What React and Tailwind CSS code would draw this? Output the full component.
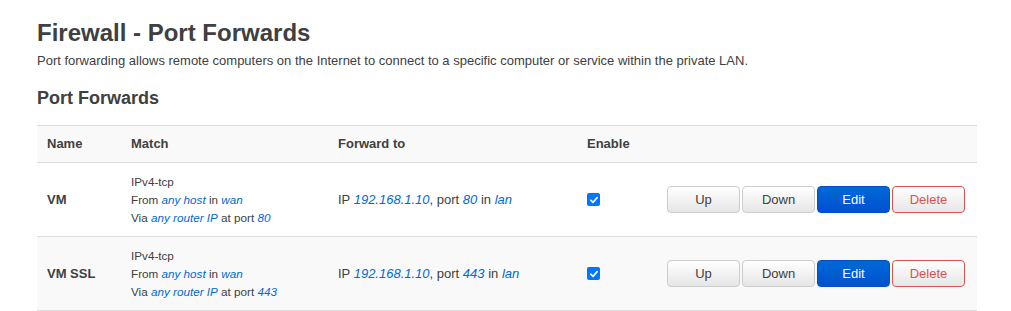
import React from 'react'

const rows = [
  { name: 'VM', port: '80', bg: 'bg-white' },
  { name: 'VM SSL', port: '443', bg: 'bg-[#f9f9f9]' },
]

function L({ children }) {
  return <em className="text-[#0069d6] italic">{children}</em>
}

function Btn({ children, kind }) {
  const base = 'w-[73px] h-[27px] rounded-[4px] text-[13px] flex items-center justify-center border'
  if (kind === 'edit') return <button className={`${base} border-[#0050c8] bg-gradient-to-b from-[#0069d6] to-[#0050d0] text-white`}>{children}</button>
  if (kind === 'delete') return <button className={`${base} border-[#d9534f] bg-gradient-to-b from-white to-[#e6e6e6] text-[#d9534f]`}>{children}</button>
  return <button className={`${base} border-[#ccc] bg-gradient-to-b from-white to-[#e6e6e6] text-[#404040]`}>{children}</button>
}

export default function App() {
  return (
    <div className="min-h-[311px] bg-white px-[37px] pt-[18px] text-[#404040]" style={{ fontFamily: '"Liberation Sans", Arial, sans-serif' }}>
      <h1 className="text-[24px] font-bold leading-[30px]">Firewall - Port Forwards</h1>
      <p className="text-[13px] leading-[18px] mt-[4px]">Port forwarding allows remote computers on the Internet to connect to a specific computer or service within the private LAN.</p>
      <h2 className="text-[18px] font-bold leading-[22px] mt-[17px]">Port Forwards</h2>
      <div className="mt-[16px] w-[940px] border-t border-[#ddd]">
        <div className="flex h-[37px] items-center bg-[#f9f9f9] border-b border-[#ddd] text-[13px] font-bold">
          <div className="w-[94px] pl-[10px]">Name</div>
          <div className="w-[207px]">Match</div>
          <div className="w-[249px]">Forward to</div>
          <div className="w-[80px]">Enable</div>
        </div>
        {rows.map(r => (
          <div key={r.name} className={`flex h-[74px] items-center border-b border-[#ddd] ${r.bg}`}>
            <div className="w-[94px] pl-[10px] text-[13px] font-bold">{r.name}</div>
            <div className="w-[207px] text-[11.7px] leading-[18px]">
              <div>IPv4-tcp</div>
              <div>From <L>any host</L> in <L>wan</L></div>
              <div>Via <L>any router IP</L> at port <L>{r.port}</L></div>
            </div>
            <div className="w-[249px] text-[13px]">IP <L>192.168.1.10</L>, port <L>{r.port}</L> in <L>lan</L></div>
            <div className="w-[80px] flex items-center">
              <span className="w-[13px] h-[13px] rounded-[2px] bg-[#0075ff] flex items-center justify-center">
                <svg viewBox="0 0 12 12" className="w-[10px] h-[10px]"><path d="M2.2 6.3 L4.8 8.8 L9.8 3.2" fill="none" stroke="white" strokeWidth="2" strokeLinecap="round" strokeLinejoin="round" /></svg>
              </span>
            </div>
            <div className="flex gap-[2px]">
              <Btn>Up</Btn>
              <Btn>Down</Btn>
              <Btn kind="edit">Edit</Btn>
              <Btn kind="delete">Delete</Btn>
            </div>
          </div>
        ))}
      </div>
    </div>
  )
}
